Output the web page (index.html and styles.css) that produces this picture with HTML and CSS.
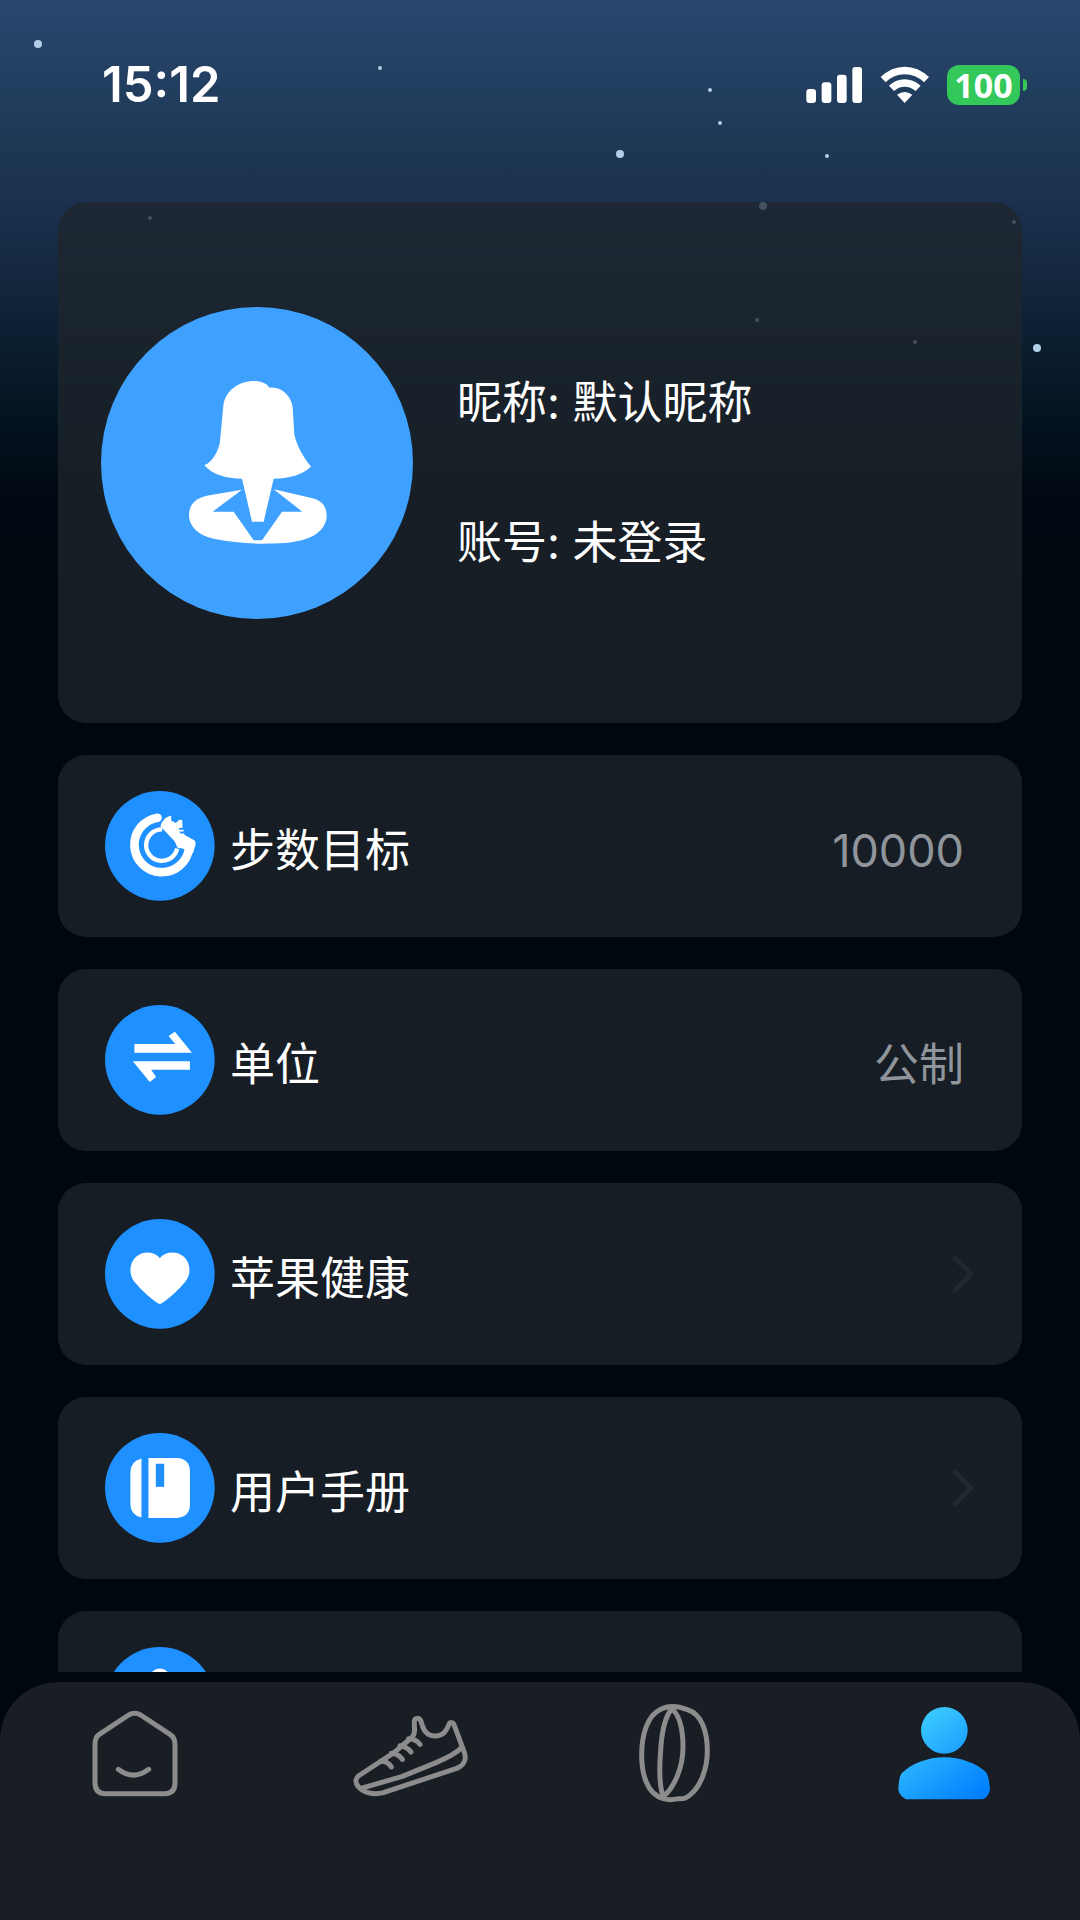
FILE: index.html
```html
<!DOCTYPE html>
<html lang="zh-CN">
<head>
    <meta charset="UTF-8">
    <meta name="viewport" content="width=device-width, initial-scale=1.0">
    <title>我的</title>
    <link rel="stylesheet" href="styles.css">
</head>
<body>
    <svg class="stars" width="1080" height="400" aria-hidden="true">
        <circle cx="38" cy="44" r="4"/>
        <circle cx="380" cy="68" r="2"/>
        <circle cx="710" cy="90" r="2"/>
        <circle cx="720" cy="123" r="2"/>
        <circle cx="620" cy="154" r="4"/>
        <circle cx="827" cy="156" r="2"/>
        <circle cx="763" cy="206" r="4"/>
        <circle cx="150" cy="218" r="2"/>
        <circle cx="1014" cy="222" r="2"/>
        <circle cx="757" cy="320" r="2"/>
        <circle cx="915" cy="342" r="2"/>
        <circle cx="1037" cy="348" r="4"/>
    </svg>

    <header class="status-bar">
        <span class="time">15:12</span>
        <div class="status-icons">
            <svg width="57" height="40" viewBox="78 75 171 120" fill="#fff" aria-hidden="true">
                <rect x="79" y="147" width="29" height="42" rx="9"/>
                <rect x="125" y="127" width="29" height="62" rx="9"/>
                <rect x="171" y="104" width="29" height="85" rx="9"/>
                <rect x="217" y="81" width="29" height="108" rx="9"/>
            </svg>
            <svg width="50" height="40" viewBox="300 75 150 120" aria-hidden="true">
                <path d="M302 111Q334 80 374 80T447 111L432 127Q407 103 374 103T317 127Z" fill="#fff"/>
                <path d="M327 137Q349 118 374 118T422 137L407 153Q392 140 374 140T342 153Z" fill="#fff"/>
                <path d="M351 164Q374 148 397 164L374 189Z" fill="#fff"/>
            </svg>
            <div class="battery"><span class="battery-level">100</span></div>
        </div>
    </header>

    <main class="content">
        <section class="card profile">
            <svg class="avatar" viewBox="33 48 936 936" aria-hidden="true">
                <circle cx="501" cy="516" r="468" fill="#3fa1ff"/>
                <path d="M343 523C372 511 390 470 391 440L400 345C405 300 445 270 493 270C512 270 532 277 538 290C575 286 604 315 608 350L613 430C620 465 642 502 663 527C635 553 595 562 551 563L521 692H486L456 563C410 563 368 552 343 523Z" fill="#fff"/>
                <path d="M456 596L350 614C315 622 297 642 297 672C297 705 325 735 375 744C420 753 470 758 520 758C560 758 610 757 645 745C685 733 710 705 710 675C710 645 695 630 668 622L551 595L637 662H576L516 748H491L431 662H368Z" fill="#fff"/>
            </svg>
            <div class="profile-info">
                <p>昵称: 默认昵称</p>
                <p>账号: 未登录</p>
            </div>
        </section>

        <button class="card row" type="button">
            <svg class="row-icon" viewBox="77 92 329 329" aria-hidden="true">
                <circle cx="241" cy="256" r="164" fill="#1e90ff"/>
                <path d="M234 172A82 82 0 1 0 328 266" fill="none" stroke="#fff" stroke-width="26" stroke-linecap="round"/>
                <path d="M248 207A47 47 0 1 0 293 264" fill="none" stroke="#fff" stroke-width="13"/>
                <path d="M243 199C246 181 258 169 275 166L275 180L289 188L299 178L308 179L309 202L298 203L299 208L312 208V213H300L302 219L315 219L314 223L344 239Q349 243 348 251L340 279L309 264L294 262L285 242L255 210Z" fill="#fff"/>
            </svg>
            <span class="row-label">步数目标</span>
            <span class="row-value">10000</span>
        </button>

        <button class="card row" type="button">
            <svg class="row-icon" viewBox="77 75 329 329" aria-hidden="true">
                <circle cx="241" cy="239" r="164" fill="#1e90ff"/>
                <path d="M165 192H287L267 168L286 155L337 218H165Z" fill="#fff"/>
                <path d="M331 269H215L230 290L211 305L160 243H331Z" fill="#fff"/>
            </svg>
            <span class="row-label">单位</span>
            <span class="row-value">公制</span>
        </button>

        <button class="card row" type="button">
            <svg class="row-icon" viewBox="77 57 329 329" aria-hidden="true">
                <circle cx="241" cy="221" r="164" fill="#1e90ff"/>
                <path d="M241 174C221 152 190 153 170 170C150 188 147 222 165 245C183 267 215 297 234 308Q241 313 248 308C267 297 299 267 317 245C336 222 333 188 313 170C293 153 261 152 241 174Z" fill="#fff"/>
            </svg>
            <span class="row-label">苹果健康</span>
            <svg class="chevron" viewBox="0 0 24 40" aria-hidden="true"><path d="M4 4L20 20L4 36"/></svg>
        </button>

        <button class="card row" type="button">
            <svg class="row-icon" viewBox="77 699 329 329" aria-hidden="true">
                <circle cx="241" cy="863" r="164" fill="#1e90ff"/>
                <path d="M186 775V952Q153 943 153 912V815Q153 784 186 775Z" fill="#fff"/>
                <path d="M207 774H291Q331 776 331 814V913Q331 951 291 953H207Z" fill="#fff"/>
                <rect x="229" y="791" width="25" height="69" fill="#1e90ff"/>
            </svg>
            <span class="row-label">用户手册</span>
            <svg class="chevron" viewBox="0 0 24 40" aria-hidden="true"><path d="M4 4L20 20L4 36"/></svg>
        </button>

        <button class="card row" type="button" aria-label="关于">
            <svg class="row-icon" viewBox="196 171 329 329" aria-hidden="true">
                <circle cx="360" cy="335" r="164" fill="#1e90ff"/>
                <circle cx="360" cy="266" r="31" fill="#fff"/>
                <rect x="336" y="310" width="48" height="120" rx="20" fill="#fff"/>
            </svg>
        </button>
    </main>

    <nav class="tab-bar">
        <a class="tab" href="#" aria-label="首页">
            <svg viewBox="75 309 420 360" aria-hidden="true">
                <path d="M266 375Q284 364 302 375L390 433Q405 443 405 462V578Q405 611 373 611H197Q165 611 165 578V462Q165 443 178 433Z"/>
                <path d="M235 538Q280 573 326 538"/>
            </svg>
        </a>
        <a class="tab" href="#" aria-label="运动">
            <svg viewBox="885 309 420 360" aria-hidden="true">
                <path d="M955 558L1062 488L1117 441Q1126 430 1123 410V398C1122 381 1138 382 1143 394C1149 415 1155 437 1185 438C1212 438 1220 420 1227 403C1230 396 1239 396 1242 404L1273 487C1281 510 1270 527 1250 535L1030 608C1000 616 970 608 955 590C945 577 945 568 955 558Z"/>
                <path d="M963 595L1085 560L1190 517Q1245 494 1266 472"/>
                <path d="M1106 446Q1128 446 1140 463M1080 467Q1102 470 1113 486M1054 490Q1076 492 1087 508M1022 514Q1044 514 1054 531"/>
            </svg>
        </a>
        <a class="tab" href="#" aria-label="戒指">
            <svg viewBox="15 309 420 360" aria-hidden="true">
                <path d="M180 359Q215 340 262 359C305 372 322 425 322 482C322 540 300 590 272 613Q258 628 235 626Q210 632 190 626C140 612 125 550 125 495C125 430 145 375 180 359Z"/>
                <path d="M215 357C235 370 249 410 249 470C249 530 225 590 190 620C178 590 178 530 182 480C185 430 195 380 215 357Z"/>
            </svg>
        </a>
        <a class="tab active" href="#" aria-label="我的" aria-current="page">
            <svg viewBox="825 309 420 360" aria-hidden="true">
                <defs>
                    <linearGradient id="user-fill" gradientUnits="userSpaceOnUse" x1="930" y1="365" x2="1130" y2="625">
                        <stop offset="0" stop-color="#41d1ff"/>
                        <stop offset="1" stop-color="#007fff"/>
                    </linearGradient>
                </defs>
                <circle cx="1033" cy="421" r="70" fill="url(#user-fill)"/>
                <path d="M905 550C935 520 985 502 1033 502S1130 520 1158 547C1167 560 1168 580 1170 600Q1165 622 1148 628H918Q899 618 895 600C896 580 897 562 905 550Z" fill="url(#user-fill)"/>
            </svg>
        </a>
    </nav>
</body>
</html>
```

FILE: styles.css
```css
* {
    box-sizing: border-box;
}

body {
    margin: 0;
    height: 100vh;
    display: flex;
    flex-direction: column;
    overflow: hidden;
    position: relative;
    font-family: Inter, 'Noto Sans CJK SC', sans-serif;
    color: #fff;
    background: linear-gradient(#29486f 0, #1d3754 150px, #1b314f 200px, #11253a 295px, #061726 390px, #010a13 490px, #00070f 590px);
}

.stars {
    position: absolute;
    top: 0;
    left: 0;
    z-index: -1;
    fill: #b3cfe8;
}

/* status bar */
.status-bar {
    flex: none;
    height: 170px;
    padding: 0 53px 0 102px;
    display: flex;
    align-items: center;
    justify-content: space-between;
}

.time {
    font-size: 49px;
    font-weight: 600;
    line-height: 60px;
}

.status-icons {
    display: flex;
    align-items: center;
    gap: 17px;
}

.battery {
    display: flex;
    align-items: center;
    gap: 3px;
}

.battery::after {
    content: "";
    width: 4px;
    height: 12px;
    border-radius: 0 6px 6px 0;
    background: #34c759;
}

.battery-level {
    width: 73px;
    height: 40px;
    border-radius: 12px;
    background: #34c759;
    font-family: 'Noto Sans', sans-serif;
    font-size: 34px;
    font-weight: 700;
    line-height: 40px;
    text-align: center;
}

/* settings list */
.content {
    flex: 1;
    min-height: 0;
    margin-bottom: 10px;
    padding: 32px 58px 0;
    display: flex;
    flex-direction: column;
    gap: 32px;
    overflow-y: auto;
    scrollbar-width: none;
}

.card {
    flex: none;
    border-radius: 28px;
    background: rgba(31, 38, 44, 0.75);
}

.profile {
    min-height: 521px;
    padding: 48px 43px;
    display: flex;
    align-items: center;
    gap: 44px;
}

.avatar {
    flex: none;
    width: 312px;
    height: 312px;
}

.profile-info {
    padding-top: 20px;
    display: flex;
    flex-direction: column;
    gap: 80px;
    font-size: 45px;
    line-height: 60px;
}

.profile-info p {
    margin: 0;
}

.row {
    min-height: 182px;
    padding: 36px 47px;
    display: flex;
    align-items: center;
    border: none;
    color: inherit;
    font-family: inherit;
    font-size: 45px;
    line-height: 60px;
    text-align: left;
    cursor: pointer;
}

.row-icon {
    flex: none;
    width: 110px;
    height: 110px;
    margin-right: 15px;
}

.row-label {
    flex: 1;
    padding-top: 10px;
}

.row-value {
    padding: 10px 11px 0 0;
    color: #8f959b;
}

.chevron {
    width: 24px;
    height: 40px;
    fill: none;
    stroke: #22282f;
    stroke-width: 5;
    stroke-linecap: round;
    stroke-linejoin: round;
}

/* bottom navigation */
.tab-bar {
    flex: none;
    height: 238px;
    padding-top: 11px;
    display: flex;
    align-items: flex-start;
    border-radius: 58px 58px 0 0;
    background: #191d24;
}

.tab {
    flex: 1;
    display: flex;
    justify-content: center;
}

.tab svg {
    width: 140px;
    height: 120px;
    fill: none;
    stroke: #8c8c8c;
    stroke-width: 15;
    stroke-linecap: round;
    stroke-linejoin: round;
}

.tab.active svg {
    stroke: none;
}
```
